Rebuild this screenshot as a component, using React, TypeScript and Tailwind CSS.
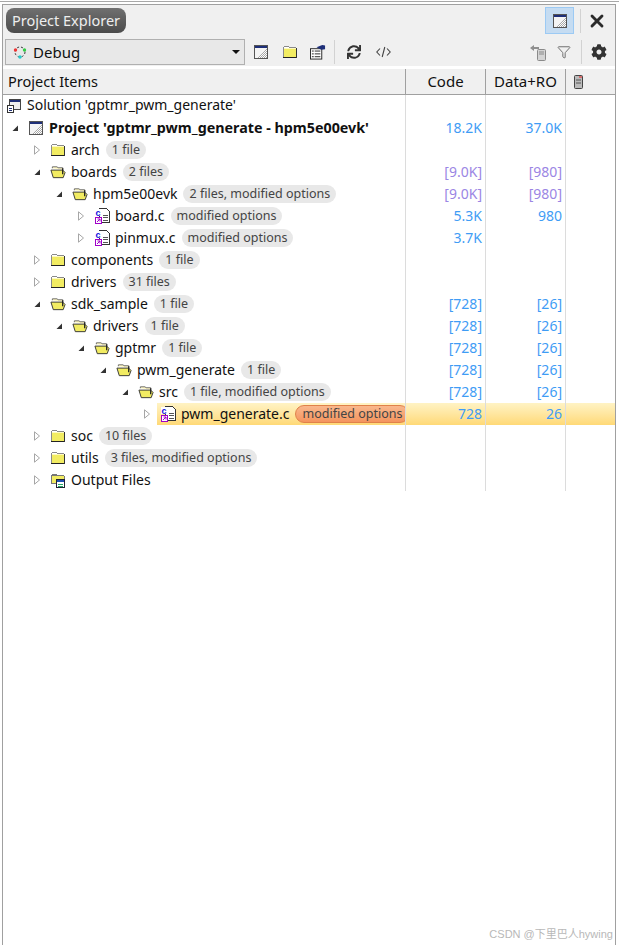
import { X, Filter } from 'lucide-react';
import { FaCog, FaSync } from 'react-icons/fa';

type Row = {
  name: string;
  level: number;
  icon: 'solution' | 'project' | 'closed' | 'open' | 'file' | 'output';
  arrow?: 'open' | 'closed';
  badge?: string;
  code?: string;
  data?: string;
  purple?: boolean;
  bold?: boolean;
  selected?: boolean;
};

const rows: Row[] = [
  { name: "Solution 'gptmr_pwm_generate'", level: 0, icon: 'solution' },
  { name: "Project 'gptmr_pwm_generate - hpm5e00evk'", level: 1, icon: 'project', arrow: 'open', bold: true, code: '18.2K', data: '37.0K' },
  { name: 'arch', level: 2, icon: 'closed', arrow: 'closed', badge: '1 file' },
  { name: 'boards', level: 2, icon: 'open', arrow: 'open', badge: '2 files', code: '[9.0K]', data: '[980]', purple: true },
  { name: 'hpm5e00evk', level: 3, icon: 'open', arrow: 'open', badge: '2 files, modified options', code: '[9.0K]', data: '[980]', purple: true },
  { name: 'board.c', level: 4, icon: 'file', arrow: 'closed', badge: 'modified options', code: '5.3K', data: '980' },
  { name: 'pinmux.c', level: 4, icon: 'file', arrow: 'closed', badge: 'modified options', code: '3.7K' },
  { name: 'components', level: 2, icon: 'closed', arrow: 'closed', badge: '1 file' },
  { name: 'drivers', level: 2, icon: 'closed', arrow: 'closed', badge: '31 files' },
  { name: 'sdk_sample', level: 2, icon: 'open', arrow: 'open', badge: '1 file', code: '[728]', data: '[26]' },
  { name: 'drivers', level: 3, icon: 'open', arrow: 'open', badge: '1 file', code: '[728]', data: '[26]' },
  { name: 'gptmr', level: 4, icon: 'open', arrow: 'open', badge: '1 file', code: '[728]', data: '[26]' },
  { name: 'pwm_generate', level: 5, icon: 'open', arrow: 'open', badge: '1 file', code: '[728]', data: '[26]' },
  { name: 'src', level: 6, icon: 'open', arrow: 'open', badge: '1 file, modified options', code: '[728]', data: '[26]' },
  { name: 'pwm_generate.c', level: 7, icon: 'file', arrow: 'closed', badge: 'modified options', code: '728', data: '26', selected: true },
  { name: 'soc', level: 2, icon: 'closed', arrow: 'closed', badge: '10 files' },
  { name: 'utils', level: 2, icon: 'closed', arrow: 'closed', badge: '3 files, modified options' },
  { name: 'Output Files', level: 2, icon: 'output', arrow: 'closed' },
];

function WindowIcon() {
  return (
    <svg width="14" height="14" viewBox="0 0 14 14" shapeRendering="crispEdges">
      <defs>
        <pattern id="grayDither" width="2" height="2" patternUnits="userSpaceOnUse">
          <rect width="2" height="2" fill="#fff" />
          <rect width="1" height="1" fill="#a8a8a8" />
          <rect x="1" y="1" width="1" height="1" fill="#a8a8a8" />
        </pattern>
      </defs>
      <rect x="0.5" y="0.5" width="13" height="13" fill="#f4f4f4" stroke="#555" />
      <rect x="1" y="1" width="12" height="2" fill="#1e2f78" />
      <path d="M13 3v10H3z" fill="url(#grayDither)" />
    </svg>
  );
}

function FolderClosed() {
  return (
    <svg width="16" height="14" viewBox="0 0 16 14" shapeRendering="crispEdges">
      <path d="M1 2h1V1h5v1h7v1h1v10H1z" fill="#8a8a8a" />
      <rect x="2" y="2" width="5" height="1" fill="#fff" />
      <rect x="2" y="3" width="12" height="9" fill="#f2ec62" />
      <rect x="2" y="3" width="12" height="1" fill="#fffbc0" />
      <rect x="1" y="12" width="14" height="1.2" fill="#222" />
      <rect x="14" y="3" width="1.2" height="10" fill="#333" />
    </svg>
  );
}

function FolderOpen() {
  return (
    <svg width="17" height="14" viewBox="0 0 17 14">
      <path d="M2.5 3V1.5h5l1 1h5v2" fill="#fff8c0" stroke="#666" />
      <path d="M1 5h12.5l2.5 2.5-2 5.5H3.5z" fill="#f2ec62" stroke="#333" />
      <path d="M13.5 3v6.5" stroke="#222" strokeWidth="1.4" />
    </svg>
  );
}

function CFile() {
  return (
    <svg width="16" height="16" viewBox="0 0 16 16" shapeRendering="crispEdges">
      <path d="M5.5 0.5h7l2.5 2.5v11.5h-9.5z" fill="#fff" stroke="#333" />
      <path d="M9 7h5M9 9.5h5M9 12h5" stroke="#555" />
      <rect x="1" y="1" width="7" height="7" fill="#fff" />
      <text x="1.5" y="7.5" fontSize="9" fontWeight="700" fill="#1010e0" fontFamily="Liberation Sans, sans-serif" shapeRendering="auto">c</text>
      <rect x="1.5" y="9.5" width="6" height="6" fill="#fff" stroke="#a000c8" />
      <path d="M3 14l3-3M3.5 11H6v2.5" stroke="#a000c8" fill="none" shapeRendering="auto" />
    </svg>
  );
}

function SolutionIcon() {
  return (
    <svg width="14" height="14" viewBox="0 0 14 14" shapeRendering="crispEdges">
      <rect x="2.5" y="0.5" width="11" height="10" fill="#eee" stroke="#444" />
      <rect x="3" y="1" width="10" height="2" fill="#1e2f78" />
      <rect x="0.5" y="6.5" width="6" height="7" fill="#fff" stroke="#333" />
      <path d="M2 9h3M2 11h3" stroke="#1e2f78" />
    </svg>
  );
}

function OutputIcon() {
  return (
    <svg width="16" height="15" viewBox="0 0 16 15" shapeRendering="crispEdges">
      <path d="M1 2h1V1h5v1h7v1h1v8H1z" fill="#777" />
      <rect x="2" y="3" width="12" height="7" fill="#f2ec62" />
      <rect x="6.5" y="6.5" width="8" height="8" fill="#fff" stroke="#223" />
      <rect x="7" y="7" width="7" height="2" fill="#1e4fb0" />
      <path d="M8 11h5M8 13h5" stroke="#2a6" />
    </svg>
  );
}

function RowIcon({ icon }: { icon: Row['icon'] }) {
  if (icon === 'project') return <WindowIcon />;
  if (icon === 'closed') return <FolderClosed />;
  if (icon === 'open') return <FolderOpen />;
  if (icon === 'file') return <CFile />;
  if (icon === 'output') return <OutputIcon />;
  return <SolutionIcon />;
}

function Arrow({ kind }: { kind?: 'open' | 'closed' }) {
  if (kind === 'open') {
    return (
      <svg width="8" height="8" viewBox="0 0 8 8">
        <path d="M7 1.5V7H1.5z" fill="#333" />
      </svg>
    );
  }
  if (kind === 'closed') {
    return (
      <svg width="8" height="10" viewBox="0 0 8 10">
        <path d="M1.5 0.8L6.5 5 1.5 9.2z" fill="#fff" stroke="#a6a6a6" />
      </svg>
    );
  }
  return null;
}

function TreeRow({ row }: { row: Row }) {
  const valueColor = row.purple ? 'text-[#9b86e4]' : 'text-[#3f9cf5]';
  const highlight = row.selected ? 'bg-gradient-to-b from-[#fff3c4] to-[#ffd976]' : '';
  return (
    <div className="flex h-[22px] items-center">
      <div className="flex h-full w-[402px] shrink-0 items-center overflow-hidden">
        {row.level === 0 ? (
          <div className="flex items-center pl-[4px]">
            <SolutionIcon />
            <span className="ml-[6px] -translate-y-px whitespace-nowrap text-[#111]">{row.name}</span>
          </div>
        ) : (
          <div className="flex h-full w-full items-center" style={{ paddingLeft: 4 + (row.level - 1) * 22 }}>
            <span className="flex w-4 shrink-0 justify-center"><Arrow kind={row.arrow} /></span>
            <div className={`ml-[2px] flex h-full flex-1 items-center pl-[3px] ${highlight}`}>
              <span className="flex w-4 justify-center"><RowIcon icon={row.icon} /></span>
              <span className={`ml-[5px] whitespace-nowrap text-[#111] ${row.bold ? 'text-[14.3px] font-bold' : ''}`}>{row.name}</span>
              {row.badge && (
                <span className={`ml-[6px] flex h-[18px] items-center whitespace-nowrap rounded-full px-[6px] text-[12.5px] text-[#444] ${row.selected ? 'border border-[#e0814a] bg-gradient-to-b from-[#f9b88c] to-[#f4945e] text-[#3a2a20]' : 'bg-[#e8e8e8]'}`}>
                  {row.badge}
                </span>
              )}
            </div>
          </div>
        )}
      </div>
      <div className={`flex h-full w-[80px] shrink-0 items-center justify-end border-l border-[#dcdcdc] pr-[3px] ${highlight}`}>
        <span className={valueColor}>{row.code}</span>
      </div>
      <div className={`flex h-full w-[80px] shrink-0 items-center justify-end border-l border-[#dcdcdc] pr-[3px] ${highlight}`}>
        <span className={valueColor}>{row.data}</span>
      </div>
      <div className={`h-full flex-1 border-l border-[#dcdcdc] ${highlight}`} />
    </div>
  );
}

export default function App() {
  return (
    <div className="relative h-[945px] w-[619px] overflow-hidden bg-white pt-[1px] font-['Noto_Sans','Open_Sans',sans-serif] text-[14px] leading-none">
      <div className="h-[1px] bg-[#a8a8a8]" />
      <div className="ml-[2px] mr-[3px] mt-[2px] flex h-[941px] flex-col border-x border-t border-[#a0a0a0] bg-white">
        <div className="bg-[#f0f0f0]">
          {/* Title bar */}
          <div className="flex h-[30px] items-center justify-between pl-[3px] pr-[2px] pt-[1px]">
            <span className="flex h-[25px] w-[120px] items-center justify-center rounded-[8px] bg-gradient-to-b from-[#707070] to-[#4c4c4c] text-[14.5px] text-[#eee]">
              Project Explorer
            </span>
            <div className="flex items-center">
              <span className="ml-[1px] flex h-[27px] w-[29px] items-center justify-center border border-[#9ccaf4] bg-[#c5dcf2]">
                <WindowIcon />
              </span>
              <span className="ml-[6px] h-[24px] w-px bg-[#d2d2d2]" />
              <span className="flex w-[32px] justify-center">
                <X size={20} strokeWidth={3.4} className="text-[#2b2b2b]" />
              </span>
            </div>
          </div>
          {/* Toolbar */}
          <div className="flex h-[31px] items-center pl-[2px] pr-[8px] pt-[3px]">
            <div className="flex h-[26px] w-[240px] items-center justify-between border border-[#b0b0b0] bg-[#e8e8e8] pl-[7px] pr-[4px]">
              <span className="flex items-center gap-[6px] text-[15px] text-[#111]">
                <svg width="14" height="14" viewBox="0 0 14 14">
                  <circle cx="7" cy="7" r="5" fill="none" stroke="#333" strokeDasharray="2 2" />
                  <circle cx="2.5" cy="5" r="1.7" fill="#e33" />
                  <circle cx="11.5" cy="5" r="1.7" fill="#3c4" />
                  <circle cx="7" cy="12" r="1.7" fill="#2cc" />
                </svg>
                Debug
              </span>
              <svg width="8" height="4" viewBox="0 0 8 4">
                <path d="M0 0h8L4 4z" fill="#111" />
              </svg>
            </div>
            <span className="ml-[8px] flex w-[16px] justify-center"><WindowIcon /></span>
            <span className="ml-[13px] flex w-[16px] justify-center"><FolderClosed /></span>
            <span className="ml-[12px] flex w-[16px] justify-center">
              <svg width="17" height="16" viewBox="0 0 17 16">
                <rect x="0.5" y="4.5" width="12" height="11" fill="#fff" stroke="#222" />
                <path d="M2 7h2M5 7h6M2 10h2M5 10h6M2 13h2M5 13h6" stroke="#222" />
                <path d="M7 3l6-2.5 3 .5v4l-4 .5z" fill="#1e2f78" />
              </svg>
            </span>
            <span className="ml-[8px] h-[24px] w-px bg-[#d2d2d2]" />
            <span className="ml-[11px] flex w-[16px] justify-center">
              <FaSync size={14} className="text-[#333]" />
            </span>
            <span className="ml-[13px] flex w-[16px] justify-center">
              <svg width="15" height="12" viewBox="0 0 15 12" fill="none" stroke="#444" strokeWidth="1.1">
                <path d="M4 2.5L0.8 6 4 9.5M11 2.5L14.2 6 11 9.5M8.8 1L6.2 11" />
              </svg>
            </span>
            <span className="ml-auto flex w-[18px] justify-center">
              <svg width="18" height="17" viewBox="0 0 18 17">
                <path d="M1 4l4-3v2h5v2H5v2z" fill="#8f8f8f" />
                <rect x="8.5" y="5.5" width="8" height="11" rx="1" fill="#d4d4d4" stroke="#8a8a8a" />
                <path d="M10 8h5M10 10h5" stroke="#8a8a8a" />
              </svg>
            </span>
            <span className="ml-[9px] flex w-[16px] justify-center">
              <Filter size={14} strokeWidth={1.6} className="text-[#666]" />
            </span>
            <span className="ml-[9px] h-[24px] w-px bg-[#d2d2d2]" />
            <span className="ml-[9px] flex w-[16px] justify-center">
              <FaCog size={16} className="text-[#333]" />
            </span>
          </div>
        </div>
        {/* Column headers */}
        <div className="mt-[3px] flex h-[26px] border-b border-[#a0a0a0] bg-[#f0f0f0] text-[14.5px] text-[#111]">
          <div className="flex w-[402px] shrink-0 items-center pl-[5px]">Project Items</div>
          <div className="flex w-[80px] shrink-0 items-center justify-center border-l border-[#a0a0a0] text-[15px]">Code</div>
          <div className="flex w-[80px] shrink-0 items-center justify-center border-l border-[#a0a0a0] text-[15px]">Data+RO</div>
          <div className="flex flex-1 items-center border-l border-[#a0a0a0] pl-[8px]">
            <svg width="9" height="14" viewBox="0 0 9 14">
              <rect x="0.5" y="0.5" width="8" height="13" rx="1" fill="#bbb" stroke="#444" />
              <path d="M5 2h3" stroke="#e22" />
              <path d="M2 5h5M2 8h5" stroke="#555" />
            </svg>
          </div>
        </div>
        {rows.map((row, i) => (
          <TreeRow key={i} row={row} />
        ))}
      </div>
      <span className="absolute bottom-[5px] right-[6px] font-['Liberation_Sans','Noto_Sans_CJK_SC',sans-serif] text-[11px] text-[#b8b8b8]">
        CSDN @下里巴人hywing
      </span>
    </div>
  );
}
